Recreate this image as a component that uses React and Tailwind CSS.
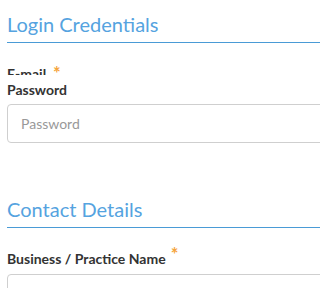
import React from 'react';

const Req = () => (
  <span className="ml-[5px] text-[18px] leading-none font-bold text-[#f5a43c] align-[3px]">*</span>
);

const Heading = ({ children }) => (
  <h2 className="pt-[12px] pb-[6px] text-[20px] leading-[24px] font-normal text-[#55a3e0] border-b border-[#4a9bd6]">
    {children}
  </h2>
);

const App = () => {
  return (
    <div className="w-full h-[288px] overflow-hidden bg-white font-['Lato','Liberation_Sans',sans-serif]">
      <div className="w-[calc(100%+40px)] pl-[7px]">
        <Heading>Login Credentials</Heading>

        <div className="mt-[21px] h-[11px] relative">
          <div className="h-[11px] overflow-hidden">
            <label className="block text-[14px] leading-[20px] font-bold text-[#333]">E-mail</label>
          </div>
          <span className="absolute left-[41px] top-0 text-[14px] leading-[20px]">
            <Req />
          </span>
        </div>
        <label className="block mt-[5px] text-[14px] leading-[20px] font-bold text-[#333]">Password</label>
        <input
          type="password"
          placeholder="Password"
          className="mt-[4px] block w-full h-[39px] rounded-[4px] border border-[#cfcfcf] pl-[13px] text-[14px] placeholder:text-[#999] outline-none"
        />

        <div className="mt-[42px]">
          <Heading>Contact Details</Heading>
        </div>

        <label className="block mt-[17px] text-[14px] leading-[20px] font-bold text-[#333]">
          Business / Practice Name<Req />
        </label>
        <input
          type="text"
          className="mt-[5px] block w-full h-[39px] rounded-[4px] border border-[#cfcfcf] pl-[13px] text-[14px] outline-none"
        />
      </div>
    </div>
  );
};

export default App;
